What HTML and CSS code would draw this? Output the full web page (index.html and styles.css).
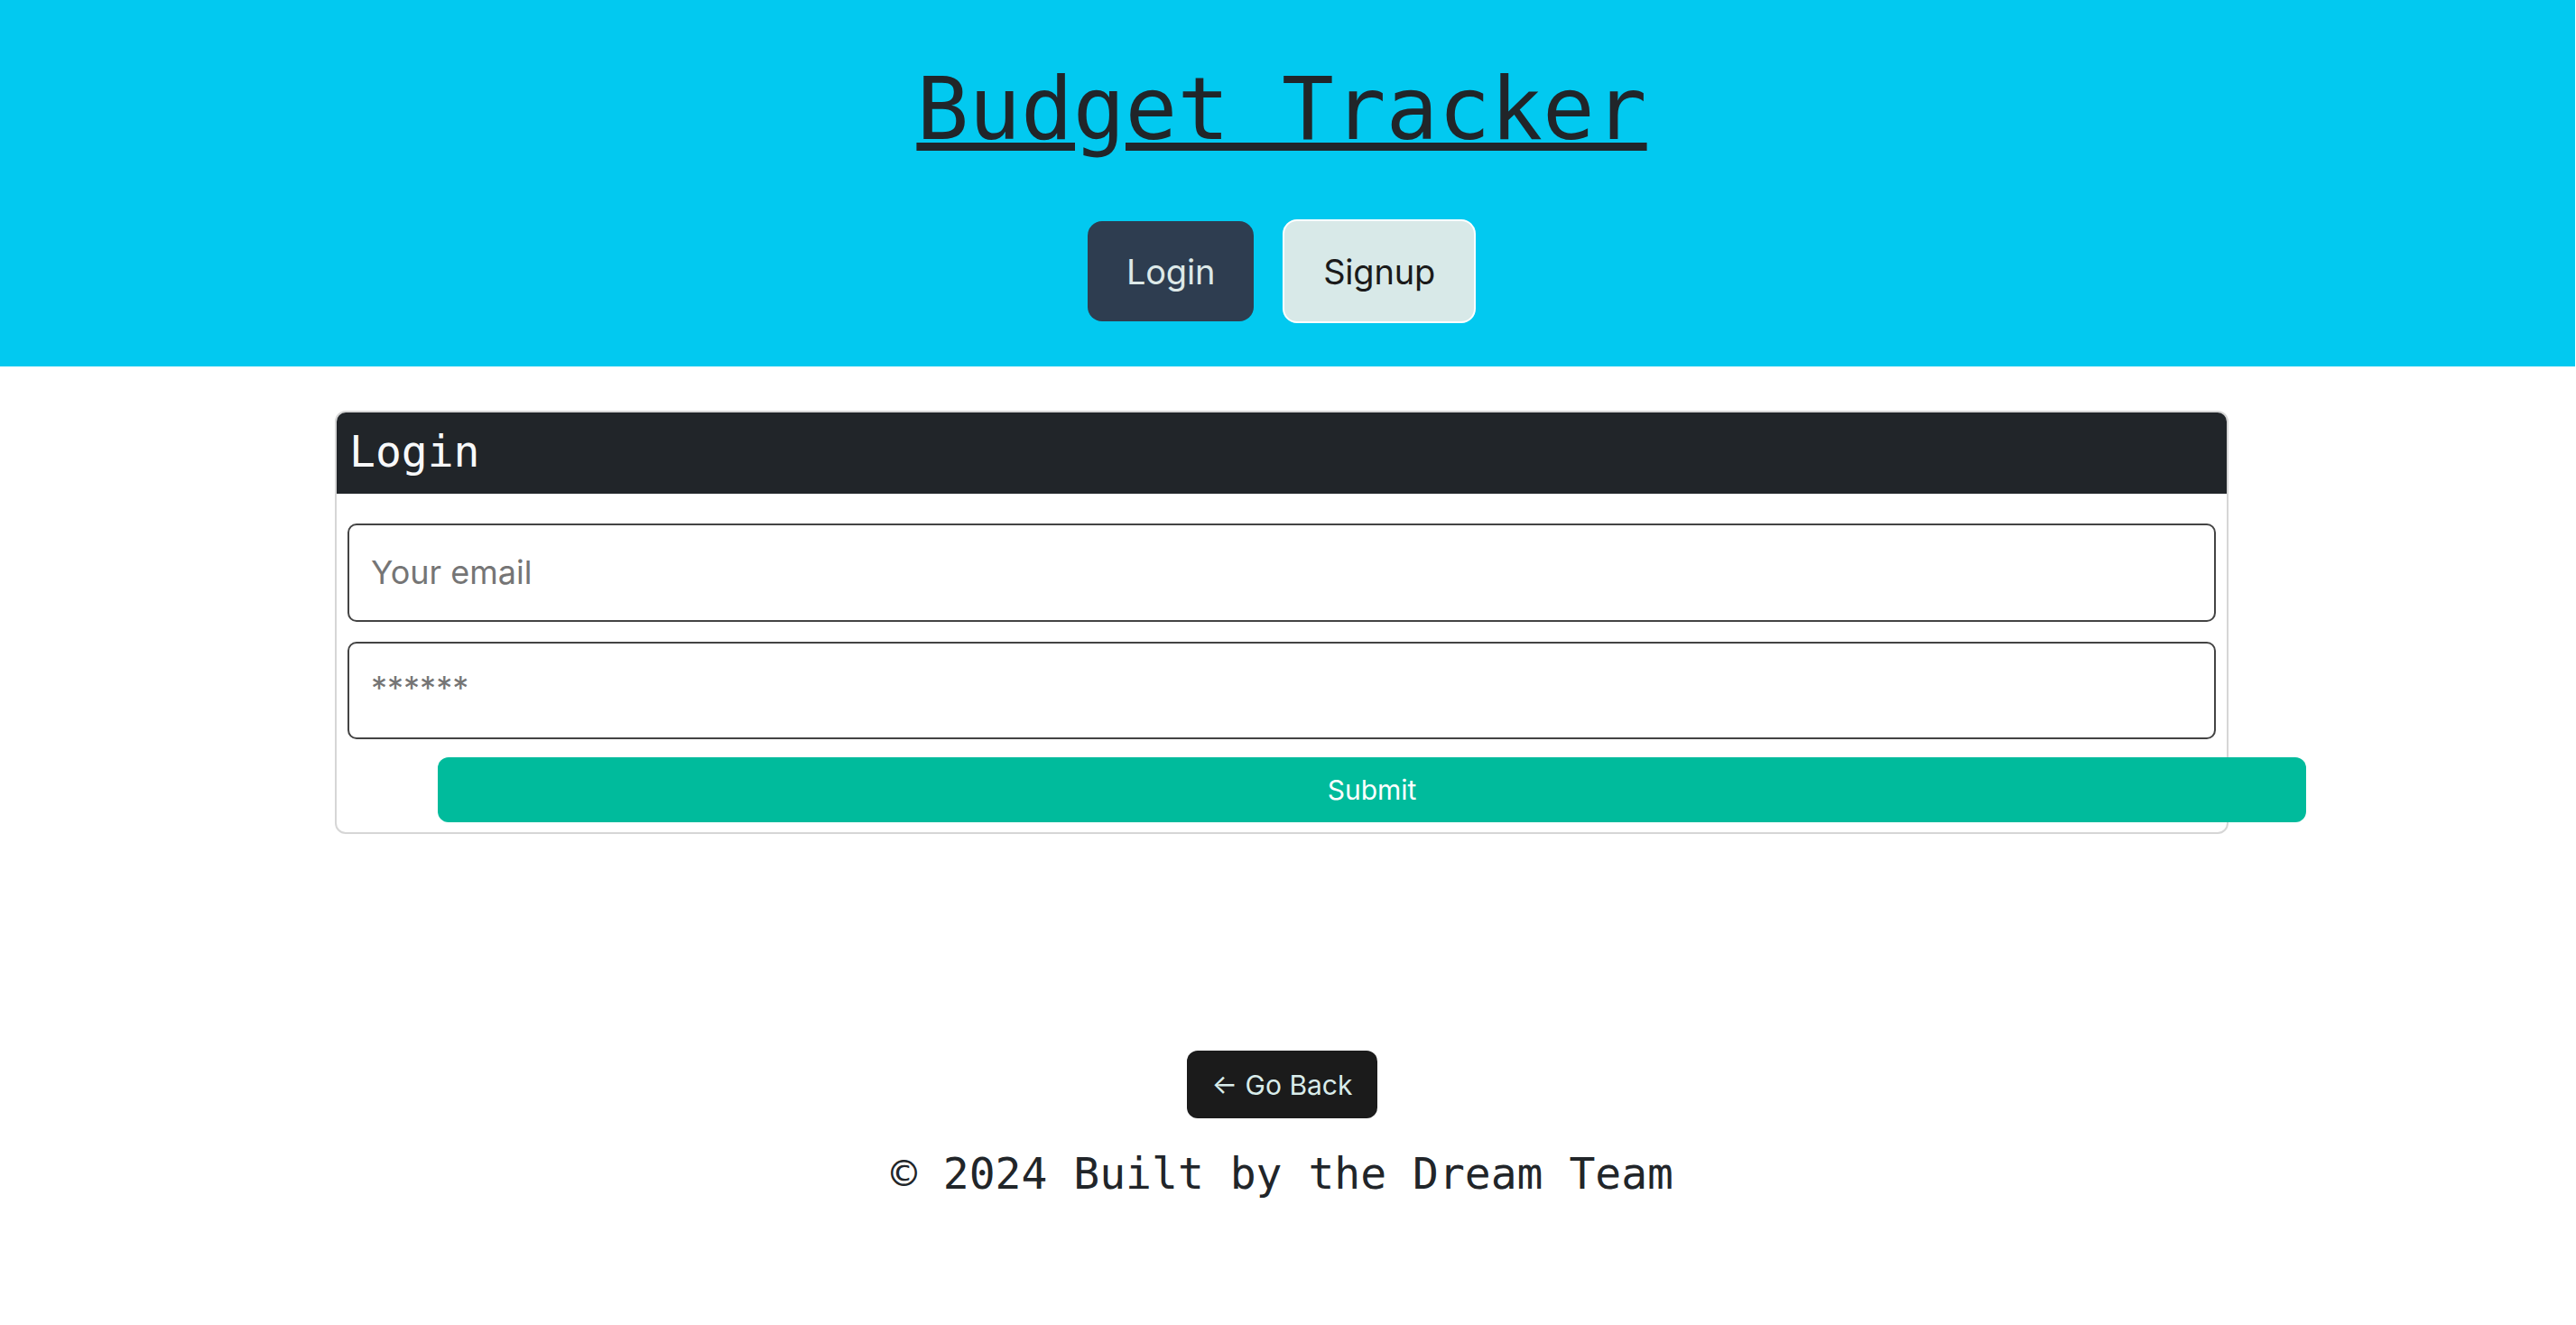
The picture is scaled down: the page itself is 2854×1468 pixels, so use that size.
FILE: index.html
```html
<!DOCTYPE html>
<html lang="en">
<head>
<meta charset="utf-8">
<title>Budget Tracker</title>
<link rel="stylesheet" href="styles.css">
</head>
<body>
<header class="site-header">
  <h1 class="title"><a class="title-link" href="#">Budget Tracker</a></h1>
  <nav class="nav">
    <button class="btn btn-login" type="button">Login</button>
    <button class="btn btn-signup" type="button">Signup</button>
  </nav>
</header>
<main class="main">
  <section class="card">
    <div class="card-header">Login</div>
    <form class="card-body">
      <input class="field" type="email" placeholder="Your email">
      <input class="field field-pass" type="password" placeholder="******">
      <button class="submit" type="button">Submit</button>
    </form>
  </section>
</main>
<footer class="footer">
  <button class="back" type="button">← Go Back</button>
  <p class="copy">© 2024 Built by the Dream Team</p>
</footer>
</body>
</html>
```
FILE: styles.css
```css
* { box-sizing: border-box; }

html, body {
  margin: 0;
  padding: 0;
  background: #ffffff;
}

body {
  font-family: Inter, "Noto Sans", sans-serif;
  color: #212529;
}

.site-header {
  background: #02c9f0;
  margin-right: 1px;
  padding: 64px 13px 48px 0;
  display: flex;
  flex-direction: column;
  align-items: center;
}

.title {
  margin: 0;
  font-family: "DejaVu Sans Mono", monospace;
  font-weight: 400;
  font-size: 96px;
  line-height: 1.2;
}

.title-link {
  color: #212529;
  text-decoration: underline;
  text-decoration-thickness: 9px;
  text-underline-offset: 4px;
  text-decoration-skip-ink: auto;
}

.nav {
  margin-top: 64px;
  display: flex;
  align-items: center;
  gap: 32px;
}

.btn {
  font-family: Inter, "Noto Sans", sans-serif;
  font-size: 38px;
  line-height: 57px;
  padding: 28px 43px 26px;
  letter-spacing: -0.2px;
  border-radius: 16px;
  cursor: pointer;
}

.btn-login {
  background: #2e3d50;
  color: #dde9e8;
  border: none;
}

.btn-signup {
  background: #d8e9e8;
  color: #1a1a1a;
  border: 2px solid #ffffff;
}

.main {
  padding: 49px 14px 0 0;
  display: flex;
  justify-content: center;
}

.card {
  width: 2098px;
  border: 2px solid #d6d6d6;
  border-radius: 12px;
  background: #ffffff;
}

.card-header {
  background: #212529;
  color: #f8f9fa;
  font-family: "DejaVu Sans Mono", monospace;
  font-size: 48px;
  line-height: 1.2;
  padding: 15px 14px 17px;
  border-radius: 10px 10px 0 0;
}

.card-body {
  margin: 0;
  padding: 33px 12px 11px;
  display: flex;
  flex-direction: column;
}

.field {
  display: block;
  width: 100%;
  height: 109px;
  border: 2px solid #444444;
  border-radius: 10px;
  padding: 0 24px;
  font-family: Inter, "Noto Sans", sans-serif;
  font-size: 36px;
  color: #212529;
  background: #ffffff;
  outline: none;
}

.field::placeholder {
  color: #757575;
}

.field-pass {
  margin-top: 22px;
  height: 108px;
  padding-bottom: 6px;
}

.submit {
  margin-top: 20px;
  margin-left: 100px;
  width: 100%;
  height: 72px;
  border: none;
  border-radius: 12px;
  background: #00bb9c;
  color: #ffffff;
  font-family: Inter, "Noto Sans", sans-serif;
  font-size: 30px;
  cursor: pointer;
}

.footer {
  padding: 240px 13px 0 0;
  display: flex;
  flex-direction: column;
  align-items: center;
}

.back {
  background: #1b1b1b;
  color: #d9ecea;
  border: none;
  border-radius: 12px;
  font-family: Inter, "Noto Sans", sans-serif;
  font-size: 30px;
  line-height: 45px;
  padding: 16px 28px 14px;
  cursor: pointer;
}

.copy {
  margin: 33px 0 0;
  font-family: "DejaVu Sans Mono", monospace;
  font-size: 48px;
  line-height: 1.2;
  color: #212529;
}
```
